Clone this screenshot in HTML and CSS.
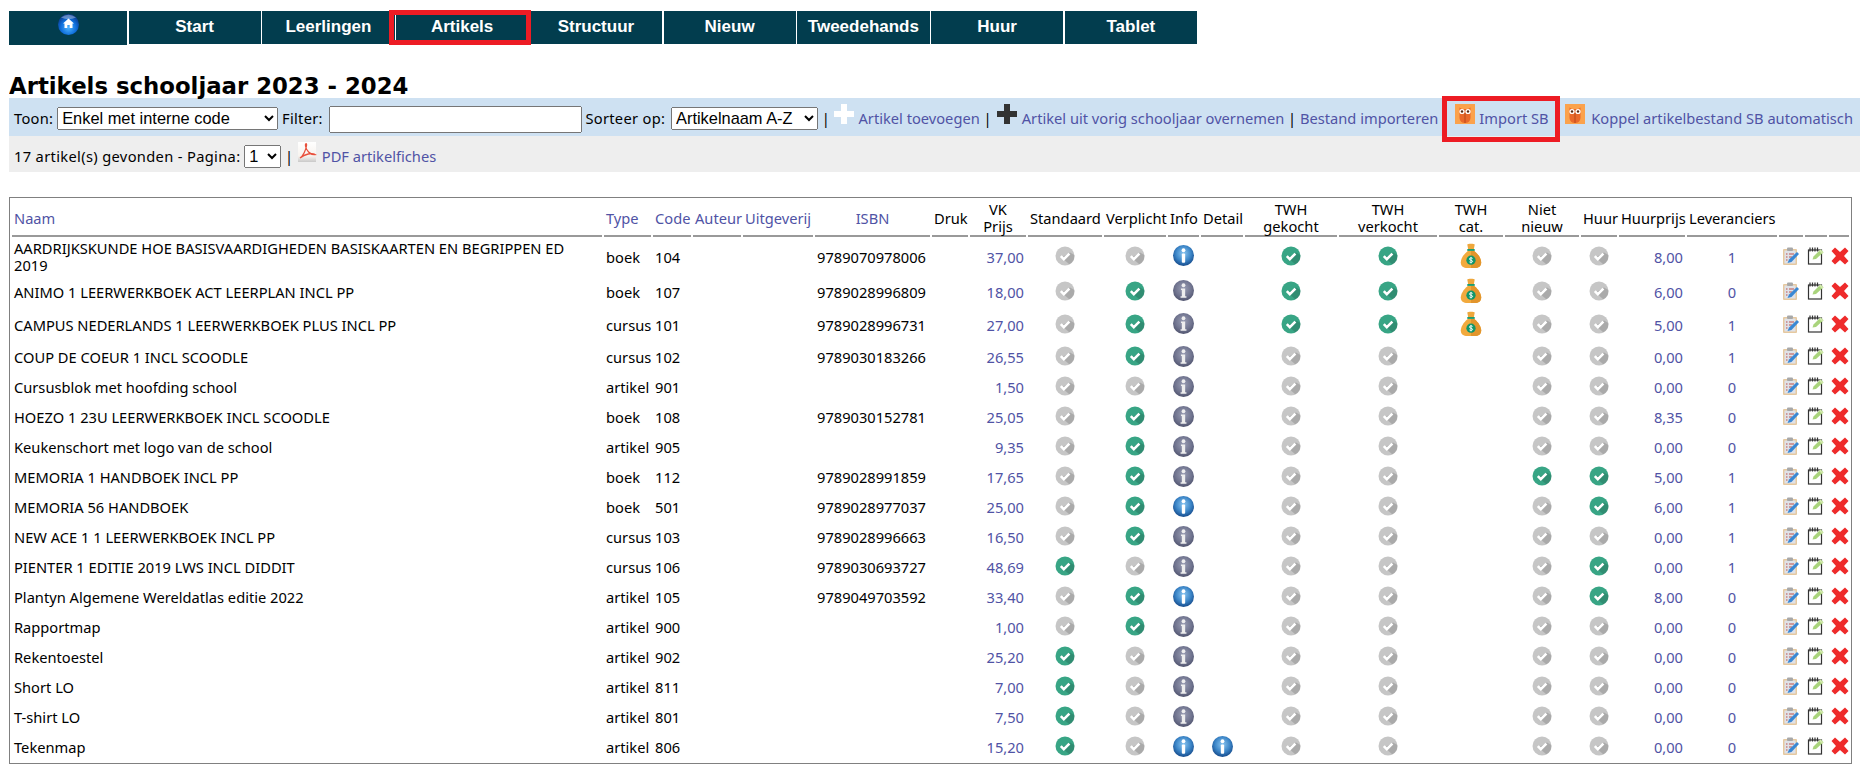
FILE: index.html
```html
<!DOCTYPE html>
<html lang="en">
<head>
    <meta charset="UTF-8">
    <meta name="viewport" content="width=device-width, initial-scale=1.0">
    <title>Artikels schooljaar 2023 - 2024</title>
    <link rel="stylesheet" href="styles.css">
</head>
<body>
    <svg class="sprite" aria-hidden="true">
        <defs>
            <radialGradient id="blue-gloss" cx="50%" cy="40%" r="65%">
                <stop offset="0" stop-color="#8cc6f0"/><stop offset="0.55" stop-color="#3c86c8"/><stop offset="1" stop-color="#0e3f80"/>
            </radialGradient>
            <radialGradient id="gray-gloss" cx="50%" cy="40%" r="65%">
                <stop offset="0" stop-color="#9a9eb4"/><stop offset="0.6" stop-color="#70748f"/><stop offset="1" stop-color="#4a4e68"/>
            </radialGradient>
            <radialGradient id="home-gloss" cx="50%" cy="65%" r="60%">
                <stop offset="0" stop-color="#4fb4ff"/><stop offset="0.6" stop-color="#0f6fdc"/><stop offset="1" stop-color="#0a3c90"/>
            </radialGradient>
            <linearGradient id="page-fade" x1="0" y1="0" x2="0" y2="1">
                <stop offset="0" stop-color="#fff"/><stop offset="0.7" stop-color="#f7f3ee"/><stop offset="1" stop-color="#c9c9c9"/>
            </linearGradient>
        </defs>
        <symbol id="check" viewBox="0 0 20 20">
            <circle cx="10" cy="10" r="9.5" fill="currentColor"/>
            <path d="M6.5 11.5 14.5 18.4A9.5 9.5 0 0 0 19.4 9L15 6.5Z" fill="#000" opacity="0.14"/>
            <path d="M5.8 10.2l3 3 5.6-5.6" fill="none" stroke="#fff" stroke-width="2.6"/>
        </symbol>
        <symbol id="info-blue" viewBox="0 0 20 20">
            <circle cx="10" cy="10" r="10" fill="url(#blue-gloss)"/>
            <circle cx="10" cy="5" r="1.8" fill="#fff"/>
            <rect x="8.4" y="8" width="3.2" height="9" rx="1" fill="#fff"/>
        </symbol>
        <symbol id="info-gray" viewBox="0 0 20 20">
            <circle cx="10" cy="10" r="10" fill="url(#gray-gloss)"/>
            <circle cx="10" cy="5" r="1.8" fill="#eee"/>
            <path d="M7.6 8h4v7.4h1.2V17H7.2v-1.6h1.2V9.6H7.6Z" fill="#eee"/>
        </symbol>
        <symbol id="bag" viewBox="0 0 24 28">
            <path d="M8 1.500C8 .5 16 .5 16 1.500L15 7H9Z" fill="#eea73c"/>
            <path d="M8.500 8.500C4 12 1 17 1 21c0 4 3 6 7 6h8c4 0 7-2 7-6 0-4-3-9-7.500-12.500Z" fill="#f2aa3d"/>
            <path d="M12 8.500h3.500C20 12 23 17 23 21c0 4-3 6-7 6h-4Z" fill="#e2952c"/>
            <rect x="8" y="6.500" width="8" height="2" fill="#16996a"/>
            <circle cx="12" cy="18.500" r="5" fill="#10966a"/>
            <path d="M13.700 16.600c-.9-.8-3.400-.8-3.400.7 0 1.500 3.400.9 3.400 2.400 0 1.500-2.500 1.500-3.400.7M12 15v7" fill="none" stroke="#fff" stroke-width="1"/>
        </symbol>
        <symbol id="clip" viewBox="0 0 18 18">
            <rect x="1" y="2" width="14" height="16" rx="1" fill="#e6c9a0"/>
            <rect x="2.500" y="3.500" width="11" height="13" fill="#dfe2e8"/>
            <rect x="5" y=".5" width="6" height="3.500" rx="1" fill="#a8a8a8"/>
            <path d="M4 7h1.500M7 7h5M4 10h1.500M7 10h3M4 13h1.500" stroke="#c0504d" stroke-width="1.200"/>
            <path d="M5.500 16 7 12.500 15 5 17 7 9.500 15Z" fill="#3a88d4"/>
        </symbol>
        <symbol id="note" viewBox="0 0 18 18">
            <rect x="1.500" y="3" width="13" height="14" fill="#fff" stroke="#333" stroke-width="1.200"/>
            <path d="M3 .5v4M5.500 .5v4M8 .5v4M10.500 .5v4" stroke="#333" stroke-width="1.200"/>
            <path d="M5.500 12.500 6.500 9.500 13.500 2.500 16.500 5.200 9 12Z" fill="#a9d47c"/>
            <path d="M13.500 2.500 16.500 5.200 15 6.700 12 3.900Z" fill="#d0e8ac"/>
        </symbol>
        <symbol id="cross" viewBox="0 0 18 18">
            <path d="M4 .5 9 5 14 .5 17.500 4 13 9l4.500 5L14 17.500 9 13l-5 4.500L.5 14 5 9 .5 4Z" fill="#ee2b2b"/>
        </symbol>
        <symbol id="plus" viewBox="0 0 20 20">
            <path d="M7 0h6v7h7v6h-7v7H7v-7H0V7h7Z" fill="currentColor"/>
        </symbol>
        <symbol id="owl" viewBox="0 0 20 20">
            <rect width="20" height="20" fill="#fba24c"/>
            <path d="M4.500 3.500 7 5h6l2.500-1.500L15.500 14Q15 19 10 19T4.500 14Z" fill="#e9692c"/>
            <path d="M10 9v10" stroke="#b9481a" stroke-width="1"/>
            <circle cx="7" cy="7.500" r="2.600" fill="#fff"/><circle cx="13" cy="7.500" r="2.600" fill="#fff"/>
            <circle cx="7" cy="7.500" r="1.200" fill="#5a2a14"/><circle cx="13" cy="7.500" r="1.200" fill="#5a2a14"/>
        </symbol>
        <symbol id="pdf" viewBox="0 0 20 20">
            <rect x="1" y="0" width="18" height="20" fill="url(#page-fade)"/>
            <path d="M3 16C6 14 9 8 9.500 3.500 10 1 8 1 8.500 4 9 8 13 13 18 12.500 15 10.500 8 12 3 16Z" fill="none" stroke="#e8503c" stroke-width="1.300"/>
        </symbol>
        <symbol id="home" viewBox="0 0 21 21">
            <circle cx="10.500" cy="10.500" r="10.500" fill="url(#home-gloss)"/>
            <path d="M3 3.500Q10.500 -2 18 3.500 10.500 7 3 3.500Z" fill="#fff" opacity="0.35"/>
            <path d="M10.500 4.500 16 9.500h-1.500V14h-2.800v-3h-2.400v3H6.500V9.500H5Z" fill="#fff"/>
        </symbol>
    </svg>

    <nav class="menu">
        <a class="menu-home" href="#"><svg class="i-home"><use href="#home"/></svg></a>
        <a href="#">Start</a>
        <a href="#">Leerlingen</a>
        <a class="marked" href="#">Artikels</a>
        <a href="#">Structuur</a>
        <a href="#">Nieuw</a>
        <a href="#">Tweedehands</a>
        <a href="#">Huur</a>
        <a href="#">Tablet</a>
    </nav>

    <h1>Artikels schooljaar 2023 - 2024</h1>

    <form class="bar bar-blue">
        <label>Toon:</label>
        <select class="sel-show"><option>Enkel met interne code</option></select>
        <label>Filter:</label>
        <input type="text" class="filter">
        <label>Sorteer op:</label>
        <select class="sel-sort"><option>Artikelnaam A-Z</option></select>
        |
        <a href="#"><svg class="i-20 plus-white"><use href="#plus"/></svg> Artikel toevoegen</a>
        |
        <a class="link-prev" href="#"><svg class="i-20 plus-dark"><use href="#plus"/></svg> Artikel uit vorig schooljaar overnemen</a>
        |
        <a href="#">Bestand importeren</a>
        <a class="marked import" href="#"><svg class="i-20"><use href="#owl"/></svg> Import SB</a>
        <a class="link-sb" href="#"><svg class="i-20"><use href="#owl"/></svg> Koppel artikelbestand SB automatisch</a>
    </form>
    <div class="bar bar-gray">
        <span class="count">17 artikel(s) gevonden - Pagina:</span>
        <select class="sel-page"><option>1</option></select>
        |
        <a href="#"><svg class="i-20"><use href="#pdf"/></svg> PDF artikelfiches</a>
    </div>

    <table class="articles">
        <colgroup>
            <col class="c-name"><col class="c-type"><col class="c-code"><col class="c-auth"><col class="c-pub"><col class="c-isbn"><col class="c-druk"><col class="c-vk"><col class="c-std"><col class="c-req"><col class="c-info"><col class="c-det"><col class="c-buy"><col class="c-sell"><col class="c-cat"><col class="c-niet"><col class="c-huur"><col class="c-hp"><col class="c-lev"><col class="c-a1"><col class="c-a2"><col class="c-a3">
        </colgroup>
        <thead>
            <tr>
                <th class="l"><a href="#">Naam</a></th><th class="l"><a href="#">Type</a></th><th class="l"><a href="#">Code</a></th><th class="l"><a href="#">Auteur</a></th><th class="l"><a href="#">Uitgeverij</a></th><th><a href="#">ISBN</a></th><th>Druk</th><th>VK<br>Prijs</th><th>Standaard</th><th>Verplicht</th><th>Info</th><th>Detail</th><th>TWH<br>gekocht</th><th>TWH<br>verkocht</th><th>TWH<br>cat.</th><th>Niet<br>nieuw</th><th>Huur</th><th>Huurprijs</th><th>Leveranciers</th><th></th><th></th><th></th>
            </tr>
        </thead>
        <tbody>
            <tr class="row-wrap"><td>AARDRIJKSKUNDE HOE BASISVAARDIGHEDEN BASISKAARTEN EN BEGRIPPEN ED 2019</td><td>boek</td><td>104</td><td></td><td></td><td>9789070978006</td><td></td><td class="r"><a href="#">37,00</a></td><td class="m"><svg class="no"><use href="#check"/></svg></td><td class="m"><svg class="no"><use href="#check"/></svg></td><td class="m"><svg class="info"><use href="#info-blue"/></svg></td><td></td><td class="m"><svg class="ok"><use href="#check"/></svg></td><td class="m"><svg class="ok"><use href="#check"/></svg></td><td class="m"><svg class="i-bag"><use href="#bag"/></svg></td><td class="m"><svg class="no"><use href="#check"/></svg></td><td class="m"><svg class="no"><use href="#check"/></svg></td><td class="r"><a href="#">8,00</a></td><td class="m"><a href="#">1</a></td><td class="m"><svg class="act"><use href="#clip"/></svg></td><td class="m"><svg class="act"><use href="#note"/></svg></td><td class="m"><svg class="act"><use href="#cross"/></svg></td></tr>
            <tr class="row-bag"><td>ANIMO 1 LEERWERKBOEK ACT LEERPLAN INCL PP</td><td>boek</td><td>107</td><td></td><td></td><td>9789028996809</td><td></td><td class="r"><a href="#">18,00</a></td><td class="m"><svg class="no"><use href="#check"/></svg></td><td class="m"><svg class="ok"><use href="#check"/></svg></td><td class="m"><svg class="info"><use href="#info-gray"/></svg></td><td></td><td class="m"><svg class="ok"><use href="#check"/></svg></td><td class="m"><svg class="ok"><use href="#check"/></svg></td><td class="m"><svg class="i-bag"><use href="#bag"/></svg></td><td class="m"><svg class="no"><use href="#check"/></svg></td><td class="m"><svg class="no"><use href="#check"/></svg></td><td class="r"><a href="#">6,00</a></td><td class="m"><a href="#">0</a></td><td class="m"><svg class="act"><use href="#clip"/></svg></td><td class="m"><svg class="act"><use href="#note"/></svg></td><td class="m"><svg class="act"><use href="#cross"/></svg></td></tr>
            <tr class="row-bag-low"><td>CAMPUS NEDERLANDS 1 LEERWERKBOEK PLUS INCL PP</td><td>cursus</td><td>101</td><td></td><td></td><td>9789028996731</td><td></td><td class="r"><a href="#">27,00</a></td><td class="m"><svg class="no"><use href="#check"/></svg></td><td class="m"><svg class="ok"><use href="#check"/></svg></td><td class="m"><svg class="info"><use href="#info-gray"/></svg></td><td></td><td class="m"><svg class="ok"><use href="#check"/></svg></td><td class="m"><svg class="ok"><use href="#check"/></svg></td><td class="m"><svg class="i-bag"><use href="#bag"/></svg></td><td class="m"><svg class="no"><use href="#check"/></svg></td><td class="m"><svg class="no"><use href="#check"/></svg></td><td class="r"><a href="#">5,00</a></td><td class="m"><a href="#">1</a></td><td class="m"><svg class="act"><use href="#clip"/></svg></td><td class="m"><svg class="act"><use href="#note"/></svg></td><td class="m"><svg class="act"><use href="#cross"/></svg></td></tr>
            <tr><td>COUP DE COEUR 1 INCL SCOODLE</td><td>cursus</td><td>102</td><td></td><td></td><td>9789030183266</td><td></td><td class="r"><a href="#">26,55</a></td><td class="m"><svg class="no"><use href="#check"/></svg></td><td class="m"><svg class="ok"><use href="#check"/></svg></td><td class="m"><svg class="info"><use href="#info-gray"/></svg></td><td></td><td class="m"><svg class="no"><use href="#check"/></svg></td><td class="m"><svg class="no"><use href="#check"/></svg></td><td></td><td class="m"><svg class="no"><use href="#check"/></svg></td><td class="m"><svg class="no"><use href="#check"/></svg></td><td class="r"><a href="#">0,00</a></td><td class="m"><a href="#">1</a></td><td class="m"><svg class="act"><use href="#clip"/></svg></td><td class="m"><svg class="act"><use href="#note"/></svg></td><td class="m"><svg class="act"><use href="#cross"/></svg></td></tr>
            <tr><td>Cursusblok met hoofding school</td><td>artikel</td><td>901</td><td></td><td></td><td></td><td></td><td class="r"><a href="#">1,50</a></td><td class="m"><svg class="no"><use href="#check"/></svg></td><td class="m"><svg class="no"><use href="#check"/></svg></td><td class="m"><svg class="info"><use href="#info-gray"/></svg></td><td></td><td class="m"><svg class="no"><use href="#check"/></svg></td><td class="m"><svg class="no"><use href="#check"/></svg></td><td></td><td class="m"><svg class="no"><use href="#check"/></svg></td><td class="m"><svg class="no"><use href="#check"/></svg></td><td class="r"><a href="#">0,00</a></td><td class="m"><a href="#">0</a></td><td class="m"><svg class="act"><use href="#clip"/></svg></td><td class="m"><svg class="act"><use href="#note"/></svg></td><td class="m"><svg class="act"><use href="#cross"/></svg></td></tr>
            <tr><td>HOEZO 1 23U LEERWERKBOEK INCL SCOODLE</td><td>boek</td><td>108</td><td></td><td></td><td>9789030152781</td><td></td><td class="r"><a href="#">25,05</a></td><td class="m"><svg class="no"><use href="#check"/></svg></td><td class="m"><svg class="ok"><use href="#check"/></svg></td><td class="m"><svg class="info"><use href="#info-gray"/></svg></td><td></td><td class="m"><svg class="no"><use href="#check"/></svg></td><td class="m"><svg class="no"><use href="#check"/></svg></td><td></td><td class="m"><svg class="no"><use href="#check"/></svg></td><td class="m"><svg class="no"><use href="#check"/></svg></td><td class="r"><a href="#">8,35</a></td><td class="m"><a href="#">0</a></td><td class="m"><svg class="act"><use href="#clip"/></svg></td><td class="m"><svg class="act"><use href="#note"/></svg></td><td class="m"><svg class="act"><use href="#cross"/></svg></td></tr>
            <tr><td>Keukenschort met logo van de school</td><td>artikel</td><td>905</td><td></td><td></td><td></td><td></td><td class="r"><a href="#">9,35</a></td><td class="m"><svg class="no"><use href="#check"/></svg></td><td class="m"><svg class="ok"><use href="#check"/></svg></td><td class="m"><svg class="info"><use href="#info-gray"/></svg></td><td></td><td class="m"><svg class="no"><use href="#check"/></svg></td><td class="m"><svg class="no"><use href="#check"/></svg></td><td></td><td class="m"><svg class="no"><use href="#check"/></svg></td><td class="m"><svg class="no"><use href="#check"/></svg></td><td class="r"><a href="#">0,00</a></td><td class="m"><a href="#">0</a></td><td class="m"><svg class="act"><use href="#clip"/></svg></td><td class="m"><svg class="act"><use href="#note"/></svg></td><td class="m"><svg class="act"><use href="#cross"/></svg></td></tr>
            <tr><td>MEMORIA 1 HANDBOEK INCL PP</td><td>boek</td><td>112</td><td></td><td></td><td>9789028991859</td><td></td><td class="r"><a href="#">17,65</a></td><td class="m"><svg class="no"><use href="#check"/></svg></td><td class="m"><svg class="ok"><use href="#check"/></svg></td><td class="m"><svg class="info"><use href="#info-gray"/></svg></td><td></td><td class="m"><svg class="no"><use href="#check"/></svg></td><td class="m"><svg class="no"><use href="#check"/></svg></td><td></td><td class="m"><svg class="ok"><use href="#check"/></svg></td><td class="m"><svg class="ok"><use href="#check"/></svg></td><td class="r"><a href="#">5,00</a></td><td class="m"><a href="#">1</a></td><td class="m"><svg class="act"><use href="#clip"/></svg></td><td class="m"><svg class="act"><use href="#note"/></svg></td><td class="m"><svg class="act"><use href="#cross"/></svg></td></tr>
            <tr><td>MEMORIA 56 HANDBOEK</td><td>boek</td><td>501</td><td></td><td></td><td>9789028977037</td><td></td><td class="r"><a href="#">25,00</a></td><td class="m"><svg class="no"><use href="#check"/></svg></td><td class="m"><svg class="ok"><use href="#check"/></svg></td><td class="m"><svg class="info"><use href="#info-blue"/></svg></td><td></td><td class="m"><svg class="no"><use href="#check"/></svg></td><td class="m"><svg class="no"><use href="#check"/></svg></td><td></td><td class="m"><svg class="no"><use href="#check"/></svg></td><td class="m"><svg class="ok"><use href="#check"/></svg></td><td class="r"><a href="#">6,00</a></td><td class="m"><a href="#">1</a></td><td class="m"><svg class="act"><use href="#clip"/></svg></td><td class="m"><svg class="act"><use href="#note"/></svg></td><td class="m"><svg class="act"><use href="#cross"/></svg></td></tr>
            <tr><td>NEW ACE 1 1 LEERWERKBOEK INCL PP</td><td>cursus</td><td>103</td><td></td><td></td><td>9789028996663</td><td></td><td class="r"><a href="#">16,50</a></td><td class="m"><svg class="no"><use href="#check"/></svg></td><td class="m"><svg class="ok"><use href="#check"/></svg></td><td class="m"><svg class="info"><use href="#info-gray"/></svg></td><td></td><td class="m"><svg class="no"><use href="#check"/></svg></td><td class="m"><svg class="no"><use href="#check"/></svg></td><td></td><td class="m"><svg class="no"><use href="#check"/></svg></td><td class="m"><svg class="no"><use href="#check"/></svg></td><td class="r"><a href="#">0,00</a></td><td class="m"><a href="#">1</a></td><td class="m"><svg class="act"><use href="#clip"/></svg></td><td class="m"><svg class="act"><use href="#note"/></svg></td><td class="m"><svg class="act"><use href="#cross"/></svg></td></tr>
            <tr><td>PIENTER 1 EDITIE 2019 LWS INCL DIDDIT</td><td>cursus</td><td>106</td><td></td><td></td><td>9789030693727</td><td></td><td class="r"><a href="#">48,69</a></td><td class="m"><svg class="ok"><use href="#check"/></svg></td><td class="m"><svg class="no"><use href="#check"/></svg></td><td class="m"><svg class="info"><use href="#info-gray"/></svg></td><td></td><td class="m"><svg class="no"><use href="#check"/></svg></td><td class="m"><svg class="no"><use href="#check"/></svg></td><td></td><td class="m"><svg class="no"><use href="#check"/></svg></td><td class="m"><svg class="ok"><use href="#check"/></svg></td><td class="r"><a href="#">0,00</a></td><td class="m"><a href="#">1</a></td><td class="m"><svg class="act"><use href="#clip"/></svg></td><td class="m"><svg class="act"><use href="#note"/></svg></td><td class="m"><svg class="act"><use href="#cross"/></svg></td></tr>
            <tr><td>Plantyn Algemene Wereldatlas editie 2022</td><td>artikel</td><td>105</td><td></td><td></td><td>9789049703592</td><td></td><td class="r"><a href="#">33,40</a></td><td class="m"><svg class="no"><use href="#check"/></svg></td><td class="m"><svg class="ok"><use href="#check"/></svg></td><td class="m"><svg class="info"><use href="#info-blue"/></svg></td><td></td><td class="m"><svg class="no"><use href="#check"/></svg></td><td class="m"><svg class="no"><use href="#check"/></svg></td><td></td><td class="m"><svg class="no"><use href="#check"/></svg></td><td class="m"><svg class="ok"><use href="#check"/></svg></td><td class="r"><a href="#">8,00</a></td><td class="m"><a href="#">0</a></td><td class="m"><svg class="act"><use href="#clip"/></svg></td><td class="m"><svg class="act"><use href="#note"/></svg></td><td class="m"><svg class="act"><use href="#cross"/></svg></td></tr>
            <tr><td>Rapportmap</td><td>artikel</td><td>900</td><td></td><td></td><td></td><td></td><td class="r"><a href="#">1,00</a></td><td class="m"><svg class="no"><use href="#check"/></svg></td><td class="m"><svg class="ok"><use href="#check"/></svg></td><td class="m"><svg class="info"><use href="#info-gray"/></svg></td><td></td><td class="m"><svg class="no"><use href="#check"/></svg></td><td class="m"><svg class="no"><use href="#check"/></svg></td><td></td><td class="m"><svg class="no"><use href="#check"/></svg></td><td class="m"><svg class="no"><use href="#check"/></svg></td><td class="r"><a href="#">0,00</a></td><td class="m"><a href="#">0</a></td><td class="m"><svg class="act"><use href="#clip"/></svg></td><td class="m"><svg class="act"><use href="#note"/></svg></td><td class="m"><svg class="act"><use href="#cross"/></svg></td></tr>
            <tr><td>Rekentoestel</td><td>artikel</td><td>902</td><td></td><td></td><td></td><td></td><td class="r"><a href="#">25,20</a></td><td class="m"><svg class="ok"><use href="#check"/></svg></td><td class="m"><svg class="no"><use href="#check"/></svg></td><td class="m"><svg class="info"><use href="#info-gray"/></svg></td><td></td><td class="m"><svg class="no"><use href="#check"/></svg></td><td class="m"><svg class="no"><use href="#check"/></svg></td><td></td><td class="m"><svg class="no"><use href="#check"/></svg></td><td class="m"><svg class="no"><use href="#check"/></svg></td><td class="r"><a href="#">0,00</a></td><td class="m"><a href="#">0</a></td><td class="m"><svg class="act"><use href="#clip"/></svg></td><td class="m"><svg class="act"><use href="#note"/></svg></td><td class="m"><svg class="act"><use href="#cross"/></svg></td></tr>
            <tr><td>Short LO</td><td>artikel</td><td>811</td><td></td><td></td><td></td><td></td><td class="r"><a href="#">7,00</a></td><td class="m"><svg class="ok"><use href="#check"/></svg></td><td class="m"><svg class="no"><use href="#check"/></svg></td><td class="m"><svg class="info"><use href="#info-gray"/></svg></td><td></td><td class="m"><svg class="no"><use href="#check"/></svg></td><td class="m"><svg class="no"><use href="#check"/></svg></td><td></td><td class="m"><svg class="no"><use href="#check"/></svg></td><td class="m"><svg class="no"><use href="#check"/></svg></td><td class="r"><a href="#">0,00</a></td><td class="m"><a href="#">0</a></td><td class="m"><svg class="act"><use href="#clip"/></svg></td><td class="m"><svg class="act"><use href="#note"/></svg></td><td class="m"><svg class="act"><use href="#cross"/></svg></td></tr>
            <tr><td>T-shirt LO</td><td>artikel</td><td>801</td><td></td><td></td><td></td><td></td><td class="r"><a href="#">7,50</a></td><td class="m"><svg class="ok"><use href="#check"/></svg></td><td class="m"><svg class="no"><use href="#check"/></svg></td><td class="m"><svg class="info"><use href="#info-gray"/></svg></td><td></td><td class="m"><svg class="no"><use href="#check"/></svg></td><td class="m"><svg class="no"><use href="#check"/></svg></td><td></td><td class="m"><svg class="no"><use href="#check"/></svg></td><td class="m"><svg class="no"><use href="#check"/></svg></td><td class="r"><a href="#">0,00</a></td><td class="m"><a href="#">0</a></td><td class="m"><svg class="act"><use href="#clip"/></svg></td><td class="m"><svg class="act"><use href="#note"/></svg></td><td class="m"><svg class="act"><use href="#cross"/></svg></td></tr>
            <tr><td>Tekenmap</td><td>artikel</td><td>806</td><td></td><td></td><td></td><td></td><td class="r"><a href="#">15,20</a></td><td class="m"><svg class="ok"><use href="#check"/></svg></td><td class="m"><svg class="no"><use href="#check"/></svg></td><td class="m"><svg class="info"><use href="#info-blue"/></svg></td><td class="m"><svg class="info"><use href="#info-blue"/></svg></td><td class="m"><svg class="no"><use href="#check"/></svg></td><td class="m"><svg class="no"><use href="#check"/></svg></td><td></td><td class="m"><svg class="no"><use href="#check"/></svg></td><td class="m"><svg class="no"><use href="#check"/></svg></td><td class="r"><a href="#">0,00</a></td><td class="m"><a href="#">0</a></td><td class="m"><svg class="act"><use href="#clip"/></svg></td><td class="m"><svg class="act"><use href="#note"/></svg></td><td class="m"><svg class="act"><use href="#cross"/></svg></td></tr>
        </tbody>
    </table>
</body>
</html>
```

FILE: styles.css
```css
body { margin: 0 0 0 9px; font: 14.67px/17px "Noto Sans", "Liberation Sans", sans-serif; color: #000; background: #fff; }
a { color: #5053a5; text-decoration: none; }
svg { vertical-align: baseline; }
.sprite { position: absolute; width: 0; height: 0; }

/* top menu */
.menu { display: grid; grid-template-columns: 118px repeat(8, 1fr); gap: 1.5px; width: 1188px; height: 34px; margin-top: 11px; align-items: start; }
.menu a { height: 33px; background: #023d4e; color: #fff; font: bold 17px/32px "Liberation Sans", sans-serif; text-align: center; }
.menu .menu-home { height: 34px; line-height: 0; padding-top: 3px; box-sizing: border-box; }
.i-home { width: 21px; height: 21px; }

.marked { position: relative; }
.marked::after { content: ""; position: absolute; border: 5px solid #ed1c24; }
.menu .marked::after { left: -7px; right: -3px; top: -1px; bottom: -1px; }

h1 { margin: 29px 0 0; font: bold 22.8px/24px "DejaVu Sans", sans-serif; }

/* toolbars */
.bar { white-space: nowrap; padding-left: 5px; box-sizing: border-box; }
.bar-blue { height: 38px; background: #cee1f2; padding-top: 6px; }
.bar-gray { height: 36px; background: #eee; padding-top: 6px; }
.bar label { letter-spacing: 0.3px; }
.bar a svg { margin-right: 1px; }
.count { letter-spacing: 0.34px; }
select { font: 16.4px "Liberation Sans", sans-serif; height: 23px; }
.sel-show { width: 221px; }
.sel-sort { width: 147px; margin-left: 2px; }
.sel-page { width: 37px; }
.filter { width: 253px; height: 27px; box-sizing: border-box; margin-left: 2px; }
.link-prev { margin-left: 1.5px; }
.import::after { left: -13px; right: -11px; top: -12px; bottom: -14px; }
.import { margin: 0 13px 0 12.5px; }
.bar .link-sb svg { margin-right: 2px; }
.i-20 { width: 20px; height: 20px; }
.plus-white { color: #fff; }
.plus-dark { color: #333; }

/* articles table */
.articles { table-layout: fixed; width: 1843px; margin-top: 25px; border: 1px solid #808080; border-spacing: 2px; }
.articles th { font-weight: normal; padding: 1px 2px 0; border-bottom: 2px solid #999; vertical-align: middle; text-align: center; }
.articles th.l { text-align: left; }
.articles td { height: 27px; padding: 1px 2px 0; vertical-align: middle; }
.articles .row-wrap td { height: 36px; padding-top: 0; }
.articles .row-bag td { height: 30px; padding-top: 0; }
.articles .row-bag-low td { height: 32px; padding-top: 0; }
.articles td.r { text-align: right; }
.articles td.m { text-align: center; }

.c-name { width: 590px; }
.c-type { width: 47px; }
.c-code { width: 38px; }
.c-auth { width: 48px; }
.c-pub { width: 70px; }
.c-isbn { width: 115px; }
.c-druk { width: 36px; }
.c-vk { width: 56px; }
.c-std { width: 74px; }
.c-req { width: 62px; }
.c-info { width: 31px; }
.c-det { width: 42px; }
.c-buy { width: 92px; }
.c-sell { width: 98px; }
.c-cat { width: 64px; }
.c-niet { width: 74px; }
.c-huur { width: 36px; }
.c-hp { width: 66px; }
.c-lev { width: 90px; }
.c-a1 { width: 24px; }
.c-a2 { width: 22px; }
.c-a3 { width: 20px; }

.ok, .no { width: 20px; height: 20px; }
.ok { color: #38a585; }
.no { color: #c6c6c6; }
.info { width: 21px; height: 21px; }
.i-bag { width: 24px; height: 26px; }
.act { width: 18px; height: 18px; }
```
